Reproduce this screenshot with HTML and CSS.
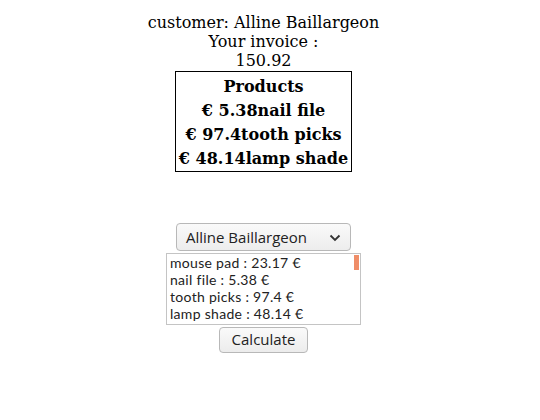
FILE: index.html
```html
<!DOCTYPE html>
<html>
<head>
<meta charset="utf-8">
<link rel="stylesheet" href="styles.css">
</head>
<body>
<div class="page">
  <div class="info">
    <div>customer: Alline Baillargeon</div>
    <div>Your invoice :</div>
    <div>150.92</div>
  </div>
  <div class="products">
    <div class="prow">Products</div>
    <div class="prow">€ 5.38nail file</div>
    <div class="prow">€ 97.4tooth picks</div>
    <div class="prow">€ 48.14lamp shade</div>
  </div>
  <div class="select">
    <span>Alline Baillargeon</span>
    <svg class="chev" width="12" height="8" viewBox="0 0 12 8"><path d="M1.5 1.5 L6 6 L10.5 1.5" fill="none" stroke="#333" stroke-width="1.8"/></svg>
  </div>
  <div class="list">
    <div class="items">
      <div>mouse pad : 23.17 €</div>
      <div>nail file : 5.38 €</div>
      <div>tooth picks : 97.4 €</div>
      <div>lamp shade : 48.14 €</div>
    </div>
    <div class="track"><div class="thumb"></div></div>
  </div>
  <div class="btn">Calculate</div>
</div>
</body>
</html>
```
FILE: styles.css
```css
html, body { margin: 0; padding: 0; background: #fff; }
.page {
  display: flex;
  flex-direction: column;
  align-items: center;
  padding-top: 13px;
  padding-right: 13px;
  font-family: "DejaVu Serif", serif;
  color: #000;
}
.info {
  font-size: 16px;
  line-height: 19px;
  text-align: center;
}
.products {
  margin-top: 1px;
  border: 1px solid #000;
  padding: 3px 3px 0;
  height: 96px;
  box-sizing: content-box;
  text-align: center;
  font-weight: bold;
  font-size: 16px;
  line-height: 24px;
  white-space: nowrap;
}
.select {
  margin-top: 51px;
  width: 175px;
  height: 28px;
  box-sizing: border-box;
  border: 1px solid #b8b8b8;
  border-radius: 4px;
  background: linear-gradient(#fafafa, #ededed);
  display: flex;
  align-items: center;
  justify-content: space-between;
  padding: 0 9px 0 9px;
  font-family: "Open Sans", "DejaVu Sans", sans-serif;
  font-size: 15px;
  color: #222;
}
.chev { margin-top: 1px; }
.list {
  margin-top: 2px;
  width: 195px;
  height: 72px;
  box-sizing: border-box;
  border: 1px solid #c4c4c4;
  display: flex;
  justify-content: space-between;
  font-family: Lato, "Open Sans", sans-serif;
  font-size: 14px;
  line-height: 17px;
  letter-spacing: 0.3px;
  color: #222;
}
.items { padding: 0 0 0 3px; white-space: nowrap; }
.track { width: 5px; margin-right: 1px; }
.thumb { width: 5px; height: 15px; background: #ef8d68; margin-top: 1px; }
.btn {
  margin-top: 2px;
  width: 89px;
  height: 26px;
  box-sizing: border-box;
  border: 1px solid #b8b8b8;
  border-radius: 4px;
  background: linear-gradient(#fafafa, #ececec);
  display: flex;
  align-items: center;
  justify-content: center;
  padding-bottom: 2px;
  font-family: "Open Sans", "DejaVu Sans", sans-serif;
  font-size: 15px;
  color: #222;
}
```
